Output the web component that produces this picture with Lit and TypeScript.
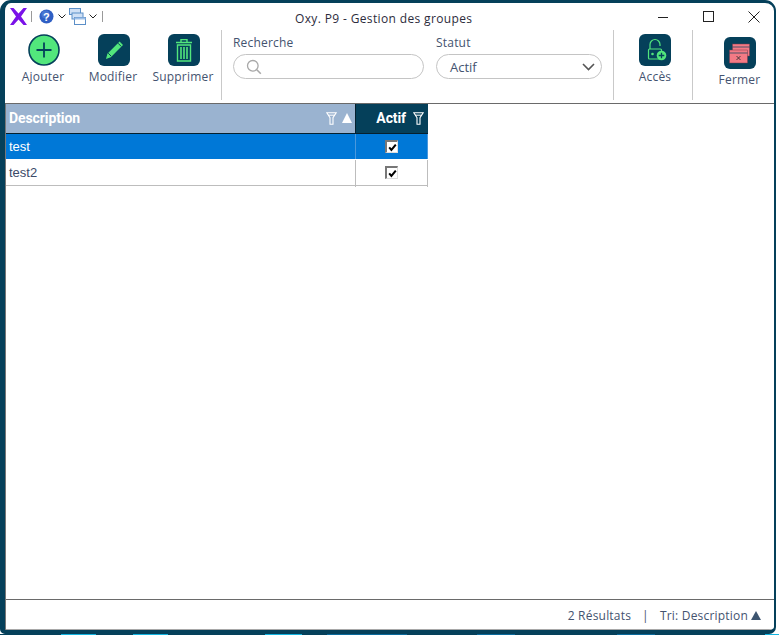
import { LitElement, html, css, svg } from "lit";
import { customElement } from "lit/decorators.js";

const strip: [number, string][] = [
  [61, ""], [35, "#12b4e0"], [37, ""], [35, "#12b4e0"], [97, ""], [37, "#12b4e0"], [25, ""],
  [80, "#0a6a9c"], [70, ""], [38, "#0a6a9c"], [102, ""], [38, "#0a6a9c"], [110, ""], [14, "#12b4e0"],
];

const funnel = svg`<svg class="funnel" width="11" height="13" viewBox="0 0 11 13"><path d="M.8.8h9.4L7 5.6v6.6H4V5.6z" fill="none" stroke="#fff" stroke-width="1.1"/><path d="M2 3.2h7" stroke="#fff"/></svg>`;
const chevron = svg`<svg width="8" height="5" viewBox="0 0 8 5"><path d="M.5.5 4 4 7.5.5" fill="none" stroke="#222" stroke-width="1"/></svg>`;
const check = svg`<svg width="9" height="9" viewBox="0 0 9 9"><path d="M1.2 4.4 3.4 7 7.8 1.6" fill="none" stroke="#000" stroke-width="2"/></svg>`;

@customElement("app-root")
export class AppRoot extends LitElement {
  static styles = css`
    :host { display: block; position: relative; width: 779px; height: 635px; overflow: hidden; background: #fff; font-family: "Open Sans", "Liberation Sans", sans-serif; font-size: 12px; letter-spacing: .2px; color: #44536f; }
    .frame { box-sizing: border-box; width: 776px; height: 634px; background: #fff; border: solid #05405a; border-width: 3px 2px 4px 5px; border-radius: 11px 11px 7px 5px; display: flex; flex-direction: column; overflow: hidden; }
    .strip { display: flex; height: 1px; background: #05405a; width: 779px; }
    .strip span { display: block; height: 1px; }
    .titlebar { display: grid; grid-template-columns: 290px 1fr auto; align-items: center; height: 27px; flex: none; }
    .quick { display: flex; align-items: center; padding-left: 5px; height: 27px; }
    .sep { width: 1px; height: 11px; background: #9a9a9a; }
    .title { font-size: 12px; color: #2c2c3c; letter-spacing: .36px; padding-top: 4px; }
    .controls { display: flex; align-items: center; padding-right: 14px; gap: 34px; }
    .controls svg { display: block; }
    .toolbar { display: flex; height: 74px; flex: none; padding-left: 3px; border-bottom: 1px solid #6a6a6a; box-sizing: border-box; }
    .tool { box-sizing: border-box; flex: none; width: 70px; display: flex; flex-direction: column; align-items: center; padding-top: 4px; gap: 2px; white-space: nowrap; }
    .tool svg { display: block; }
    .tool.main svg { margin-left: 2px; }
    .tool.access { width: 78px; padding-left: 4px; }
    .tool.low { padding: 7px 0 0 12px; width: 81px; }
    .divider { width: 1px; height: 70px; background: #c9c9c9; flex: none; }
    .gap3 { width: 3px; flex: none; }
    .gap11 { width: 11px; flex: none; }
    .gap12 { width: 12px; flex: none; }
    .field { display: flex; flex-direction: column; gap: 2px; padding-top: 4px; flex: none; }
    .field label { height: 18px; line-height: 17px; }
    .pill { box-sizing: border-box; height: 25px; border: 1px solid #c4c4c4; border-radius: 12.5px; display: flex; align-items: center; background: #fff; }
    .search { width: 191px; padding-left: 12px; }
    .select { width: 166px; padding: 0 6px 0 13px; justify-content: space-between; font-size: 13px; letter-spacing: 0; }
    .content { flex: 1; border-left: 1px solid #777; display: flex; flex-direction: column; min-height: 0; }
    .table { display: grid; grid-template-columns: 349px 1px 71px 1px; width: 422px; font-family: "Liberation Sans", Arial, sans-serif; font-size: 13px; letter-spacing: 0; }
    .hd { box-sizing: content-box; height: 28px; padding-bottom: 1px; display: flex; align-items: center; font-weight: 700; font-size: 14px; letter-spacing: -.1px; color: #fff; border-bottom: 1px solid #05202e; font-family: "Roboto", "Liberation Sans", sans-serif; }
    .hd.desc { background: #9ab3d0; padding-left: 3px; width: 346px; }
    .hd.act { background: #05405a; grid-column: span 2; justify-content: flex-end; padding-right: 4px; width: 68px; gap: 7px; }
    .hd.desc .grow { flex: 1; }
    .hd.desc .funnel { margin-right: 5px; }
    .vsep { background: #05202e; }
    .tri { width: 0; height: 0; border: solid transparent; border-width: 0 5.5px 10px; border-bottom-color: #fff; margin-right: 3px; }
    .cell { height: 25px; display: flex; align-items: center; padding-left: 3px; box-sizing: border-box; color: #3c4a68; }
    .cell.c { justify-content: center; padding-left: 0; }
    .row1 { background: #0078d7; color: #fff; height: 25px; margin-bottom: 1px; }
    .row2 { background: #fff; height: 26px; border-bottom: 1px solid #bdbdbd; }
    .line { background: #bdbdbd; }
    .line.blue { background: #4a98dc; }
    .box { box-sizing: border-box; width: 13px; height: 13px; background: #fff; border: solid; border-width: 2px 1px 1px 2px; border-color: #777 #ddd #ddd #777; display: flex; align-items: center; justify-content: center; }
    .box svg { display: block; }
    .spacer { flex: 1; }
    .status { height: 31px; flex: none; box-sizing: border-box; padding: 1px 13px 0 0; border-top: 1px solid #6a6a6a; border-bottom: 1px solid #a8a8a8; display: flex; align-items: center; justify-content: flex-end; gap: 11px; }
    .tri2 { display: inline-block; width: 0; height: 0; border: solid transparent; border-width: 0 5.5px 9px; border-bottom-color: #3d5570; margin-left: 3px; }
  `;

  private tool(label: string, icon: unknown, cls = "") {
    return html`<div class="tool ${cls}">${icon}<span>${label}</span></div>`;
  }

  render() {
    const bg = svg`<rect width="32" height="32" rx="6" fill="#05405a"/>`;
    const add = svg`<svg width="32" height="32" viewBox="0 0 32 32"><circle cx="16" cy="16" r="15" fill="#52e67c" stroke="#05405a" stroke-width="1.6"/><path d="M16 8.5v15M8.5 16h15" stroke="#05405a" stroke-width="1.8"/></svg>`;
    const edit = svg`<svg width="32" height="32" viewBox="0 0 32 32">${bg}<path d="M8 25l1.4-5.2L21.6 7.6 25 11 12.8 23.2z" fill="#52e67c"/><path d="M10.2 19.2l3 3" stroke="#05405a"/><path d="M20 9.2l3.2 3.2" stroke="#05405a"/></svg>`;
    const trash = svg`<svg width="32" height="32" viewBox="0 0 32 32">${bg}<path d="M8 8.5h16M13 8V5.6h6V8" fill="none" stroke="#52e67c" stroke-width="1.4"/><path d="M9.5 11h13v16h-13z" fill="none" stroke="#52e67c" stroke-width="1.4"/><path d="M13 13v12M16 13v12M19 13v12" stroke="#52e67c" stroke-width="1.6"/></svg>`;
    const lock = svg`<svg width="32" height="32" viewBox="0 0 32 32">${bg}<path d="M11 15v-4.5a5 5 0 0 1 10 0V12" fill="none" stroke="#52e67c" stroke-width="1.2"/><rect x="9.5" y="15" width="13" height="10" rx="1" fill="none" stroke="#52e67c" stroke-width="1.2"/><circle cx="13.5" cy="20" r="1.3" fill="#52e67c"/><circle cx="22.5" cy="21.5" r="4.8" fill="#52e67c"/><path d="M22.5 18.7v5.6M19.7 21.5h5.6" stroke="#05405a" stroke-width="1.3"/></svg>`;
    const close = svg`<svg width="32" height="32" viewBox="0 0 32 32">${bg}<rect x="8.5" y="7" width="17" height="12" fill="#f37a85" stroke="#7c3a4a" stroke-width=".5"/><path d="M8.5 10h17" stroke="#05405a" stroke-width=".7"/><rect x="5.5" y="13" width="18" height="13" fill="#f37a85" stroke="#7c3a4a" stroke-width=".5"/><path d="M5.5 16h18" stroke="#05405a" stroke-width=".7"/><path d="M12.5 19l4 4M16.5 19l-4 4" stroke="#333" stroke-width=".9"/></svg>`;

    return html`
      <div class="frame">
        <div class="titlebar">
          <div class="quick">
            <svg width="17" height="17" viewBox="0 0 17 17"><path d="M0 0h3.5L8.5 5.5 13.5 0H17L11 8.5 17 17h-3.5L8.5 11.5 3.5 17H0l6-8.5z" fill="#7a12e8"/></svg>
            <span class="sep" style="margin:0 7px 0 4px"></span>
            <svg width="15" height="15" viewBox="0 0 15 15"><circle cx="7.5" cy="7.5" r="7" fill="#2f5fc4"/><circle cx="6.5" cy="5.5" r="4" fill="#5f8be0" opacity=".5"/><text x="7.5" y="11.5" text-anchor="middle" font-size="11" font-weight="700" fill="#fff" font-family="Liberation Sans, sans-serif">?</text></svg>
            <span style="margin:0 3px 0 4px;display:flex">${chevron}</span>
            <svg width="17" height="17" viewBox="0 0 17 17"><rect x=".5" y=".5" width="11" height="6" fill="#cfe0f5" stroke="#5b8fc8"/><rect x="3" y="5" width="11" height="6" fill="#cfe0f5" stroke="#5b8fc8"/><rect x="5.5" y="9.5" width="11" height="7" fill="#fff" stroke="#5b8fc8"/><rect x="5.5" y="9.5" width="11" height="2" fill="#9dbfe8"/></svg>
            <span style="margin:0 5px 0 3px;display:flex">${chevron}</span>
            <span class="sep"></span>
          </div>
          <div class="title">Oxy. P9 - Gestion des groupes</div>
          <div class="controls">
            <svg width="10" height="10" viewBox="0 0 10 10" style="margin-right:1px"><path d="M0 5.5h10" stroke="#222"/></svg>
            <svg width="11" height="11" viewBox="0 0 11 11"><rect x=".5" y=".5" width="10" height="10" fill="none" stroke="#222"/></svg>
            <svg width="12" height="12" viewBox="0 0 12 12"><path d="M.5.5l11 11M11.5.5l-11 11" stroke="#222"/></svg>
          </div>
        </div>
        <div class="toolbar">
          ${this.tool("Ajouter", add, "main")}
          ${this.tool("Modifier", edit, "main")}
          ${this.tool("Supprimer", trash, "main")}
          <div class="gap3"></div>
          <div class="divider"></div>
          <div class="gap11"></div>
          <div class="field">
            <label>Recherche</label>
            <div class="pill search"><svg width="16" height="16" viewBox="0 0 16 16"><circle cx="6.8" cy="6.8" r="5.3" fill="none" stroke="#a8a8a8" stroke-width="1.3"/><path d="M10.8 10.8l4 4" stroke="#a8a8a8" stroke-width="1.6"/></svg></div>
          </div>
          <div class="gap12"></div>
          <div class="field">
            <label>Statut</label>
            <div class="pill select"><span>Actif</span><svg width="13" height="8" viewBox="0 0 13 8"><path d="M1 1l5.5 5.5L12 1" fill="none" stroke="#555" stroke-width="1.6"/></svg></div>
          </div>
          <div class="gap11"></div>
          <div class="divider"></div>
          ${this.tool("Accès", lock, "access")}
          <div class="divider"></div>
          ${this.tool("Fermer", close, "low")}
        </div>
        <div class="content">
          <div class="table">
            <div class="hd desc"><span>Description</span><span class="grow"></span>${funnel}<span class="tri"></span></div>
            <div class="vsep"></div>
            <div class="hd act"><span>Actif</span>${funnel}</div>
            <div class="cell row1">test</div><div class="line blue row1"></div><div class="cell c row1"><span class="box">${check}</span></div><div class="line blue row1"></div>
            <div class="cell row2">test2</div><div class="line row2"></div><div class="cell c row2"><span class="box">${check}</span></div><div class="line row2"></div>
          </div>
          <div class="spacer"></div>
          <div class="status"><span>2 Résultats</span><span>|</span><span>Tri: Description<i class="tri2"></i></span></div>
        </div>
      </div>
      <div class="strip">${strip.map(([w, c]) => html`<span style="width:${w}px;background:${c || "transparent"}"></span>`)}</div>
    `;
  }
}
